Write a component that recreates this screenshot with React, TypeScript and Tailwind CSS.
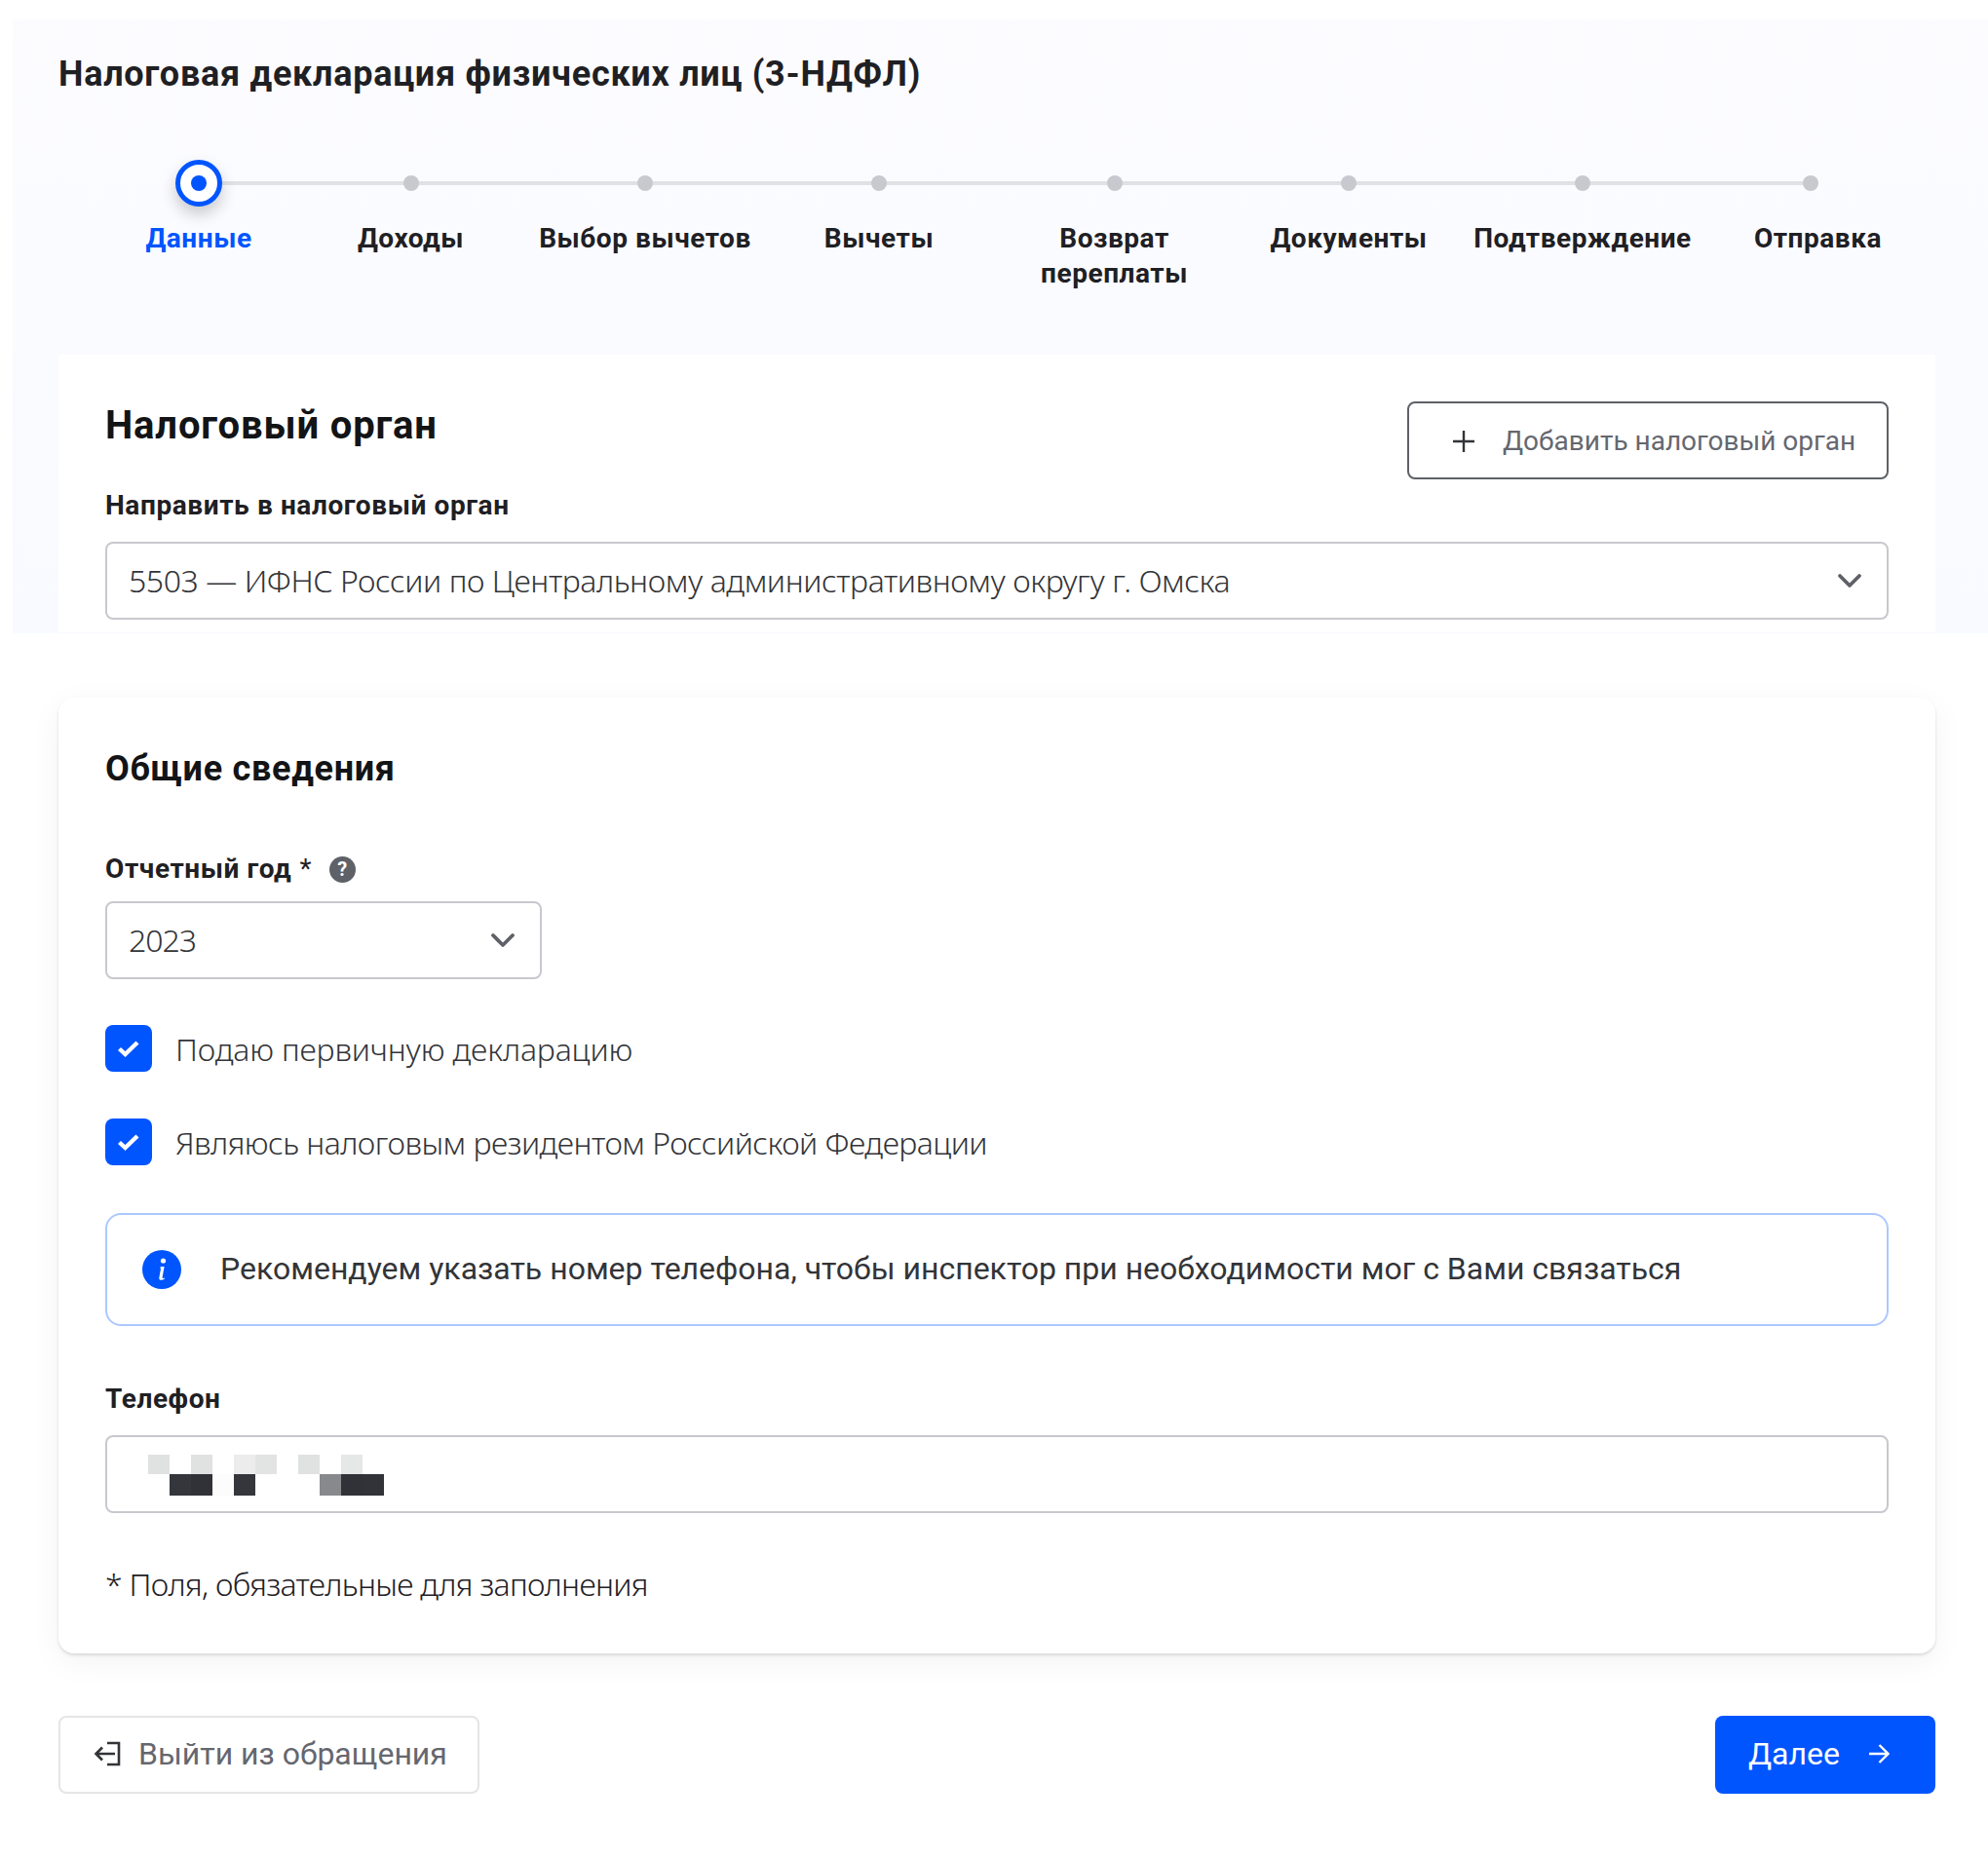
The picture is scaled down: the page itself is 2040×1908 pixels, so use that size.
import React from "react";

const steps = [
  { label: "Данные", active: true },
  { label: "Доходы" },
  { label: "Выбор вычетов" },
  { label: "Вычеты" },
  { label: "Возврат переплаты", narrow: true },
  { label: "Документы" },
  { label: "Подтверждение" },
  { label: "Отправка", last: true },
];

function Chevron() {
  return (
    <svg width="26" height="24" viewBox="0 0 26 24" fill="none" stroke="#5f6168" strokeWidth="3.8" strokeLinecap="round" strokeLinejoin="round">
      <path d="M3 7l10 10L23 7" />
    </svg>
  );
}

function Check() {
  return (
    <span className="flex h-12 w-12 shrink-0 items-center justify-center rounded-lg bg-[#0055ff]">
      <svg width="22" height="18" viewBox="0 0 22 18" fill="none" stroke="#ffffff" strokeWidth="4.4">
        <path d="M1.5 9.5l6 5.5L20 3" />
      </svg>
    </span>
  );
}

const pixelsTop = ["#e0e1e1", "", "#e0e1e1", "", "#ececec", "#e2e3e3", "", "#e0e1e1", "", "#e6e7e7", ""];
const pixelsBottom = ["", "#35363b", "#313238", "#fcfcfc", "#35363b", "", "", "", "#88898c", "#313238", "#323338"];

export default function App() {
  return (
    <div className="min-h-[1908px] w-[2040px] bg-white pt-5 font-['Roboto',sans-serif] text-[#333438]">
      <section className="ml-[13px] h-[630px] overflow-hidden bg-linear-to-b from-[#fcfcff] to-[#f8faff]">
        <h1 className="pl-[47px] pt-[33px] text-[36px] font-bold leading-[46px] tracking-[0.73px] text-[#1f2024]">
          Налоговая декларация физических лиц (3-НДФЛ)
        </h1>

        <div className="relative ml-[95px] mt-[65px] grid w-[1879px] grid-cols-[192px_243px_238px_242px_241px_240px_240px_243px]">
          <div className="absolute left-[96px] top-[22px] h-1 w-[1654px] bg-[#e0e1e4]" />
          {steps.map((s) => (
            <div key={s.label} className="relative flex flex-col items-center">
              <div className="flex h-12 w-12 items-center justify-center">
                {s.active ? (
                  <span className="flex h-12 w-12 items-center justify-center rounded-full border-[5px] border-[#0055ff] bg-white shadow-[0_8px_16px_rgba(0,0,0,0.2)]">
                    <span className="h-4 w-4 rounded-full bg-[#0055ff]" />
                  </span>
                ) : (
                  <span className={s.last ? "-ml-[16px] h-4 w-4 rounded-full bg-[#c8c9ce]" : "h-4 w-4 rounded-full bg-[#c8c9ce]"} />
                )}
              </div>
              <span
                className={
                  (s.narrow ? "w-[170px] " : "") +
                  (s.active ? "text-[#0055ff] " : "text-[#1f2024] ") +
                  "mt-[15px] text-center text-[28px] font-bold leading-[36px] tracking-[0.55px]"
                }
              >
                {s.label}
              </span>
            </div>
          ))}
        </div>

        <div className="mt-[65px] h-[285px] w-[1926px] ml-[47px] bg-white px-12">
          <div className="flex items-start justify-between pt-[48px]">
            <h2 className="mt-px text-[40px] font-bold leading-[48px] tracking-[0.85px] text-[#131416]">Налоговый орган</h2>
            <button className="flex h-20 w-[494px] items-center rounded-lg border-2 border-[#5f6168] bg-white pl-[43px] pt-[2px] text-[28px] text-[#65676f]">
              <svg width="26" height="26" viewBox="0 0 26 26" stroke="#333438" strokeWidth="2.4" fill="none" className="mr-[27px]">
                <path d="M13 2v22M2 13h22" />
              </svg>
              Добавить налоговый орган
            </button>
          </div>
          <div className="mt-[9px] text-[28px] font-bold leading-9 tracking-[0.6px] text-[#1f2024]">Направить в налоговый орган</div>
          <div className="mt-[19px] flex h-20 items-center justify-between rounded-lg border-2 border-[#c8c9ce] pl-[22px] pr-[25px] font-['Noto_Sans',sans-serif] text-[32px] font-light tracking-[-0.42px]">
            <span>5503 — ИФНС России по Центральному административному округу г. Омска</span>
            <Chevron />
          </div>
        </div>
      </section>

      <section className="ml-[60px] mt-[66px] h-[981px] w-[1926px] rounded-2xl bg-white px-12 pt-[51px] shadow-[0_2px_3px_rgba(0,0,0,0.12),0_8px_32px_rgba(0,0,0,0.05)]">
        <h2 className="text-[36px] font-bold leading-[44px] tracking-[0.7px] text-[#131416]">Общие сведения</h2>

        <div className="mt-[63px] flex h-9 items-center text-[28px] font-bold tracking-[0.6px] text-[#1f2024]">
          Отчетный год <span className="ml-2 font-normal">*</span>
          <span className="ml-[18px] flex h-[27px] w-[27px] items-center justify-center rounded-full bg-[#5f6168] text-[20px] font-bold leading-none text-white">?</span>
        </div>
        <div className="mt-[15px] flex h-20 w-[448px] items-center justify-between rounded-lg border-2 border-[#c8c9ce] pl-[22px] pr-[25px] font-['Noto_Sans',sans-serif] text-[32px] font-light tracking-[-1px]">
          <span>2023</span>
          <Chevron />
        </div>

        <label className="mt-[47px] flex items-center gap-6 font-['Noto_Sans',sans-serif] text-[32px] font-light leading-[44px] tracking-[-0.15px]">
          <Check />
          <span className="pt-[2px]">Подаю первичную декларацию</span>
        </label>
        <label className="mt-[48px] flex items-center gap-6 font-['Noto_Sans',sans-serif] text-[32px] font-light leading-[44px] tracking-[-0.53px]">
          <Check />
          <span className="pt-[2px]">Являюсь налоговым резидентом Российской Федерации</span>
        </label>

        <div className="mt-[49px] flex h-[116px] items-center rounded-2xl border-2 border-[#adc8ff] pb-[2px] pl-[36px] text-[32px]">
          <svg width="40" height="40" viewBox="0 0 40 40" className="mr-[40px] mt-[2px] shrink-0">
            <circle cx="20" cy="20" r="20" fill="#0055ff" />
            <circle cx="21.5" cy="11" r="2.6" fill="#ffffff" />
            <path d="M19 17h3.6l-2 11c-.2 1 .6 1.3 2.2.6l-.3 1.4c-3 1.3-5.6.9-5.2-1.6l1.8-9.6-1 -.3z" fill="#ffffff" />
          </svg>
          Рекомендуем указать номер телефона, чтобы инспектор при необходимости мог с Вами связаться
        </div>

        <div className="mt-[57px] text-[28px] font-bold leading-9 tracking-[0.6px] text-[#1f2024]">Телефон</div>
        <div className="mt-[19px] flex h-20 flex-col rounded-lg border-2 border-[#c8c9ce] pl-[42px] pt-[18px]">
          <div className="flex h-5">
            {pixelsTop.map((c, i) => (
              <span key={i} className="h-full w-[22px]" style={{ backgroundColor: c || "transparent" }} />
            ))}
          </div>
          <div className="flex h-[22px]">
            {pixelsBottom.map((c, i) => (
              <span key={i} className="h-full w-[22px]" style={{ backgroundColor: c || "transparent" }} />
            ))}
          </div>
        </div>

        <p className="mt-[51px] font-['Noto_Sans',sans-serif] text-[32px] font-light leading-[44px] tracking-[-0.69px] text-[#1f2024]">* Поля, обязательные для заполнения</p>
      </section>

      <div className="ml-[60px] mt-[64px] flex w-[1926px] items-center justify-between">
        <button className="flex h-20 w-[432px] items-center rounded-lg border-2 border-[#e4e5e7] bg-white pl-[34px] pb-[2px] text-[32px] text-[#65676f]">
          <svg width="30" height="26" viewBox="0 0 30 26" fill="none" stroke="#333438" strokeWidth="2.6" className="mr-[16px]">
            <path d="M14 2h12v22H14M22 13H3M9 6.5L2.5 13 9 19.5" />
          </svg>
          Выйти из обращения
        </button>
        <button className="flex h-20 w-[226px] items-center rounded-lg bg-[#0055ff] pl-[34px] pb-[2px] text-[32px] text-white">
          Далее
          <svg width="22" height="22" viewBox="0 0 22 22" fill="none" stroke="#ffffff" strokeWidth="2.4" className="ml-[29px]">
            <path d="M1 11h19M11.5 2l9 9-9 9" />
          </svg>
        </button>
      </div>
    </div>
  );
}
